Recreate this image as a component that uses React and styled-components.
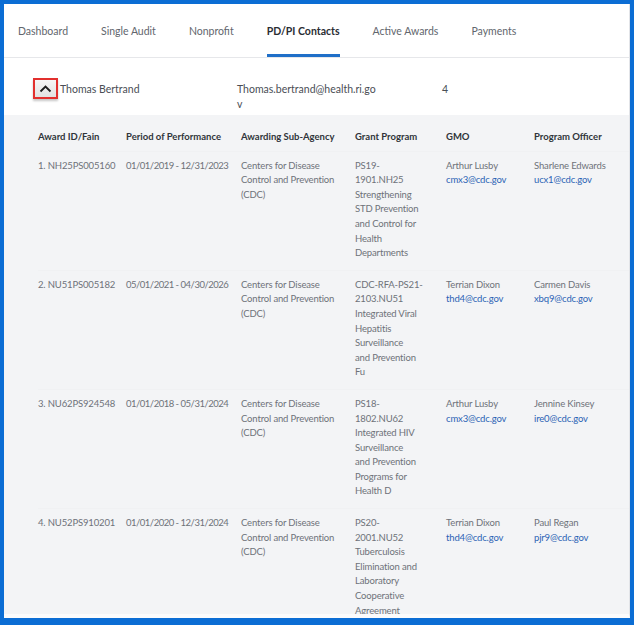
import React from "react";
import styled, { createGlobalStyle } from "styled-components";

const Global = createGlobalStyle`
  html, body { margin: 0; padding: 0; }
  body {
    background: #0b6dd4;
    font-family: "Lato", "Open Sans", sans-serif;
  }
`;

const tabs = ["Dashboard", "Single Audit", "Nonprofit", "PD/PI Contacts", "Active Awards", "Payments"];

// grant program names are kept in the line breaks the portal shows
const awards = [
  {
    id: "1. NH25PS005160",
    period: "01/01/2019 - 12/31/2023",
    agency: "Centers for Disease Control and Prevention (CDC)",
    program: ["PS19-", "1901.NH25", "Strengthening", "STD Prevention", "and Control for", "Health", "Departments"],
    gmo: "Arthur Lusby",
    gmoMail: "cmx3@cdc.gov",
    officer: "Sharlene Edwards",
    officerMail: "ucx1@cdc.gov",
  },
  {
    id: "2. NU51PS005182",
    period: "05/01/2021 - 04/30/2026",
    agency: "Centers for Disease Control and Prevention (CDC)",
    program: ["CDC-RFA-PS21-", "2103.NU51", "Integrated Viral", "Hepatitis", "Surveillance", "and Prevention", "Fu"],
    gmo: "Terrian Dixon",
    gmoMail: "thd4@cdc.gov",
    officer: "Carmen Davis",
    officerMail: "xbq9@cdc.gov",
  },
  {
    id: "3. NU62PS924548",
    period: "01/01/2018 - 05/31/2024",
    agency: "Centers for Disease Control and Prevention (CDC)",
    program: ["PS18-", "1802.NU62", "Integrated HIV", "Surveillance", "and Prevention", "Programs for", "Health D"],
    gmo: "Arthur Lusby",
    gmoMail: "cmx3@cdc.gov",
    officer: "Jennine Kinsey",
    officerMail: "ire0@cdc.gov",
  },
  {
    id: "4. NU52PS910201",
    period: "01/01/2020 - 12/31/2024",
    agency: "Centers for Disease Control and Prevention (CDC)",
    program: ["PS20-", "2001.NU52", "Tuberculosis", "Elimination and", "Laboratory", "Cooperative", "Agreement"],
    gmo: "Terrian Dixon",
    gmoMail: "thd4@cdc.gov",
    officer: "Paul Regan",
    officerMail: "pjr9@cdc.gov",
  },
];

const App = () => {
  return (
    <>
      <Global />
      <Frame>
        <Inner>
          <TabBar>
            {tabs.map((t) => (
              <Tab key={t} active={t === "PD/PI Contacts"}>{t}</Tab>
            ))}
          </TabBar>
          <ContactRow>
            <ToggleButton aria-label="collapse">
              <svg width="13" height="9" viewBox="0 0 13 9">
                <path d="M1.5 7.5 L6.5 2.5 L11.5 7.5" fill="none" stroke="#1c1c1c" strokeWidth="1.8" />
              </svg>
            </ToggleButton>
            <Name>Thomas Bertrand</Name>
            <Email>Thomas.bertrand@health.ri.gov</Email>
            <Count>4</Count>
          </ContactRow>
          <Table>
            <Row header>
              <Head>Award ID/Fain</Head>
              <Head>Period of Performance</Head>
              <Head>Awarding Sub-Agency</Head>
              <Head>Grant Program</Head>
              <Head>GMO</Head>
              <Head>Program Officer</Head>
            </Row>
            {awards.map((a) => (
              <Row key={a.id}>
                <Cell nowrap>{a.id}</Cell>
                <Cell nowrap tight>{a.period}</Cell>
                <Cell>{a.agency}</Cell>
                <Cell>
                  {a.program.map((line, i) => (
                    <Line key={i}>{line}</Line>
                  ))}
                </Cell>
                <Cell>
                  {a.gmo}
                  <Mail>{a.gmoMail}</Mail>
                </Cell>
                <Cell>
                  {a.officer}
                  <Mail>{a.officerMail}</Mail>
                </Cell>
              </Row>
            ))}
          </Table>
        </Inner>
      </Frame>
    </>
  );
};

export default App;

const Frame = styled.div`
  width: 634px;
  height: 625px;
  box-sizing: border-box;
  padding: 4px 4px 7px 4px;
  background: #0b6dd4;
`;

const Inner = styled.div`
  height: 100%;
  background: #f4f5f7;
  overflow: hidden;
  border-right: 1px solid #e2e4e8;
  border-bottom: 4px solid #fbfbfc;
  box-sizing: border-box;
`;

const TabBar = styled.div`
  display: flex;
  gap: 33px;
  padding-left: 14px;
  background: #fff;
  border-bottom: 1px solid #e6e7ea;
`;

const Tab = styled.div`
  display: flex;
  align-items: center;
  height: 46px;
  padding-top: 4px;
  font-size: 10.5px;
  color: ${({ active }) => (active ? "#2a2d33" : "#62666d")};
  font-weight: ${({ active }) => (active ? 700 : 400)};
  border-bottom: 3px solid ${({ active }) => (active ? "#1f6fc8" : "transparent")};
  white-space: nowrap;
`;

const ContactRow = styled.div`
  display: flex;
  align-items: flex-start;
  background: #fff;
  height: 57px;
  padding: 20px 0 0 29px;
  box-sizing: border-box;
  font-size: 10.5px;
  color: #4a4e55;
`;

const ToggleButton = styled.button`
  width: 25px;
  height: 21px;
  padding: 0;
  margin: 0;
  display: flex;
  align-items: center;
  justify-content: center;
  background: linear-gradient(#f6f6f6, #e2e2e2);
  border: 2px solid #e2302e;
  box-shadow: 0 2px 2px rgba(0, 0, 0, 0.22);
  cursor: pointer;
`;

const Name = styled.div`
  width: 177px;
  padding-left: 2px;
  padding-top: 3px;
  line-height: 16px;
`;

const Email = styled.div`
  width: 143px;
  word-break: break-all;
  line-height: 15px;
  padding-top: 4px;
`;

const Count = styled.div`
  margin-left: 62px;
  padding-top: 3px;
  line-height: 16px;
`;

const Table = styled.div`
  background: #f3f4f6;
  padding-left: 34px;
`;

const Row = styled.div`
  display: grid;
  grid-template-columns: 88px 115px 114px 91px 88px 1fr;
  padding: ${({ header }) => (header ? "15px 0 7px" : "7px 0 10px")};
  border-top: ${({ header }) => (header ? "none" : "1px solid #f0f1f3")};
  margin-top: ${({ header }) => (header ? "0" : "-1px")};
`;

const Head = styled.div`
  font-size: 9.5px;
  font-weight: 700;
  color: #30343a;
  line-height: 14.6px;
  white-space: nowrap;
`;

const Cell = styled.div`
  font-size: 9.5px;
  color: #6e7279;
  line-height: 14.6px;
  padding-right: 8px;
  letter-spacing: ${({ tight }) => (tight ? "-0.5px" : "-0.15px")};
  white-space: ${({ nowrap }) => (nowrap ? "nowrap" : "normal")};
`;

const Line = styled.div`
  white-space: nowrap;
`;

const Mail = styled.div`
  color: #2b63b5;
`;
